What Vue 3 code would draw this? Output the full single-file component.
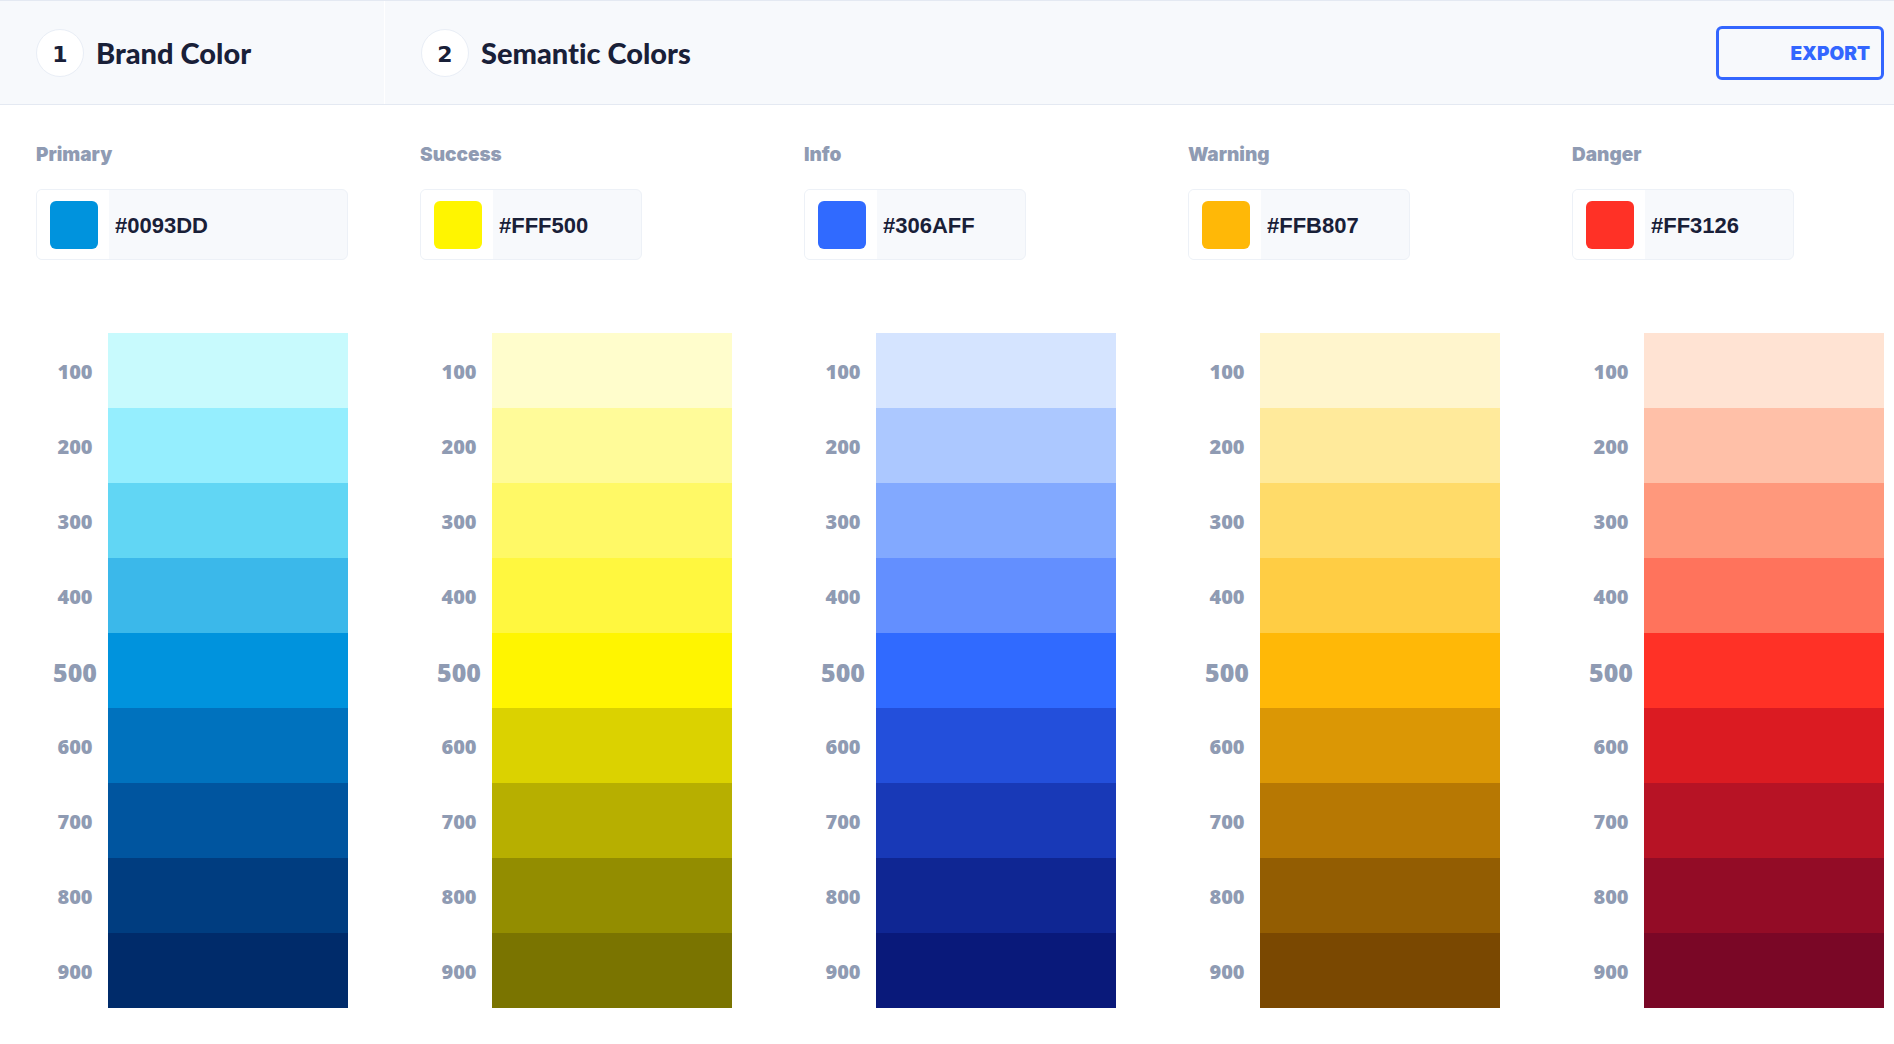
<script setup>
import { reactive } from 'vue'

const steps = [100, 200, 300, 400, 500, 600, 700, 800, 900]

const palettes = reactive([
  {
    name: 'Primary',
    hex: '#0093DD',
    shades: ['#C8FAFD', '#95EEFE', '#61D6F4', '#3BB8EA', '#0093DD', '#0072BE', '#00559F', '#003D80', '#002B6A'],
  },
  {
    name: 'Success',
    hex: '#FFF500',
    shades: ['#FFFDCC', '#FFFB99', '#FFF966', '#FFF73F', '#FFF500', '#DBD200', '#B7AF00', '#938D00', '#7A7400'],
  },
  {
    name: 'Info',
    hex: '#306AFF',
    shades: ['#D5E4FF', '#ACC8FF', '#82A9FF', '#638FFF', '#306AFF', '#234FDB', '#1839B7', '#0F2693', '#09197A'],
  },
  {
    name: 'Warning',
    hex: '#FFB807',
    shades: ['#FFF5CD', '#FFEA9B', '#FFDB69', '#FFCD44', '#FFB807', '#DB9705', '#B77803', '#935D02', '#7A4801'],
  },
  {
    name: 'Danger',
    hex: '#FF3126',
    shades: ['#FFE3D3', '#FFC0A8', '#FF987C', '#FF735C', '#FF3126', '#DB1B22', '#B71325', '#930C26', '#7A0726'],
  },
])
</script>

<template>
  <div class="page">
    <header class="columns header">
      <div class="section">
        <span class="badge">1</span>
        <h2 class="title">Brand Color</h2>
      </div>
      <div class="section semantic">
        <span class="badge">2</span>
        <h2 class="title">Semantic Colors</h2>
        <button class="export" type="button">EXPORT</button>
      </div>
    </header>

    <main class="columns">
      <section v-for="palette in palettes" :key="palette.name" class="palette">
        <label class="name" :for="'hex-' + palette.name">{{ palette.name }}</label>
        <div class="field">
          <span class="picker">
            <input v-model="palette.hex" type="color" :aria-label="palette.name + ' color'" />
          </span>
          <input :id="'hex-' + palette.name" v-model="palette.hex" class="hex" type="text" />
        </div>
        <ul class="scale">
          <li v-for="(shade, i) in palette.shades" :key="steps[i]" class="row">
            <span class="step" :class="{ base: steps[i] === 500 }">{{ steps[i] }}</span>
            <span class="shade" :style="{ background: shade }"></span>
          </li>
        </ul>
      </section>
    </main>
  </div>
</template>

<style>
body {
  background: #fff;
}
</style>

<style scoped>
.page,
.page * {
  box-sizing: border-box;
}

.page {
  font-family: Inter, "Liberation Sans", sans-serif;
  color: #192038;
}

.columns {
  display: grid;
  grid-template-columns: repeat(5, minmax(0, 1fr));
  column-gap: 72px;
  padding: 0 10px 0 36px;
}

.header {
  min-height: 105px;
  background: #f7f9fc;
  border-top: 1px solid #e4e9f2;
  border-bottom: 1px solid #e4e9f2;
}

.section {
  display: flex;
  align-items: center;
}

.semantic {
  grid-column: span 4;
  margin-left: -36px;
  padding-left: 36px;
  border-left: 1px solid #fff;
}

.badge {
  display: flex;
  align-items: center;
  justify-content: center;
  width: 48px;
  height: 48px;
  padding-top: 4px;
  border: 1px solid #e9eef6;
  border-radius: 50%;
  background: #fff;
  font-family: "DejaVu Sans", sans-serif;
  font-size: 22px;
  font-weight: 700;
}

.title {
  margin: 0 0 0 12px;
  font-family: Lato, sans-serif;
  font-size: 29px;
  font-weight: 900;
  font-variant-ligatures: none;
  line-height: 36px;
}

.export {
  width: 168px;
  height: 54px;
  margin-left: auto;
  padding: 2px 11px 0;
  border: 3px solid #3366ff;
  border-radius: 6px;
  background: transparent;
  color: #3366ff;
  font-family: inherit;
  font-size: 19px;
  font-weight: 900;
  text-align: right;
}

.palette {
  padding-top: 38px;
}

.name {
  display: block;
  color: #8f9bb3;
  font-size: 19px;
  font-weight: 900;
  line-height: 24px;
}

.field {
  display: flex;
  width: 71%;
  height: 71px;
  margin: 22px 0 73px;
  overflow: hidden;
  border: 1px solid #edf1f7;
  border-radius: 6px;
  background: #f7f9fc;
}

.palette:first-child .field {
  width: 100%;
}

.picker {
  display: flex;
  flex: none;
  align-items: center;
  width: 72px;
  padding-left: 13px;
  background: #fff;
}

.picker input {
  width: 48px;
  height: 48px;
  padding: 0;
  overflow: hidden;
  border: 0;
  border-radius: 6px;
  background: none;
}

.picker input::-webkit-color-swatch-wrapper {
  padding: 0;
}

.picker input::-webkit-color-swatch {
  border: 0;
}

.hex {
  flex: 1;
  min-width: 0;
  padding: 2px 6px 0;
  border: 0;
  background: transparent;
  color: inherit;
  font-family: "Liberation Sans", Arial, sans-serif;
  font-size: 22px;
  font-weight: 700;
}

.scale {
  margin: 0;
  padding: 0;
  list-style: none;
}

.row {
  display: flex;
  height: 75px;
}

.step {
  display: flex;
  flex: none;
  align-items: center;
  justify-content: center;
  width: 72px;
  padding: 2px 0 0 6px;
  color: #8f9bb3;
  font-family: "Open Sans", sans-serif;
  font-size: 20px;
  font-weight: 800;
}

.step.base {
  font-size: 25px;
}

.shade {
  flex: 1;
}
</style>
